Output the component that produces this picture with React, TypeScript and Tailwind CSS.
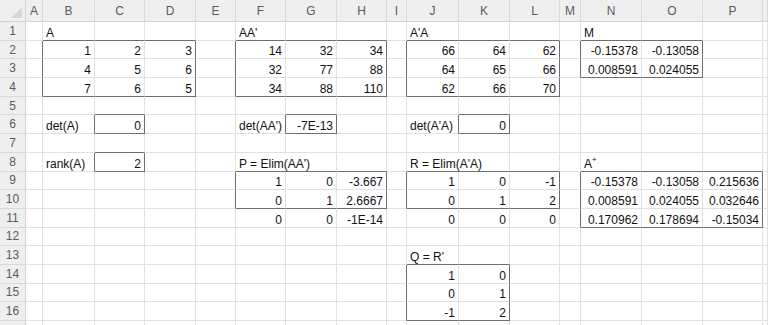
import type { ReactNode } from 'react';

// Column letters and widths of the sheet (px)
const COLS = ['A', 'B', 'C', 'D', 'E', 'F', 'G', 'H', 'I', 'J', 'K', 'L', 'M', 'N', 'O', 'P', 'Q'];
const ROW_COUNT = 17;

type Cell = { v: ReactNode; left?: boolean; span?: number };

const cells: Record<string, Cell> = {};

function put(ref: string, v: ReactNode, left = false, span = 1) {
  cells[ref] = { v, left, span };
}

// fill a block of numbers starting at a top-left cell
function block(col: string, row: number, data: (string | number)[][]) {
  const c0 = COLS.indexOf(col);
  data.forEach((line, i) =>
    line.forEach((v, j) => put(`${COLS[c0 + j]}${row + i}`, String(v)))
  );
}

put('B1', 'A', true);
put('F1', "AA'", true);
put('J1', "A'A", true);
put('N1', 'M', true);
block('B', 2, [[1, 2, 3], [4, 5, 6], [7, 6, 5]]);
block('F', 2, [[14, 32, 34], [32, 77, 88], [34, 88, 110]]);
block('J', 2, [[66, 64, 62], [64, 65, 66], [62, 66, 70]]);
block('N', 2, [['-0.15378', '-0.13058'], ['0.008591', '0.024055']]);

put('B6', 'det(A)', true);
put('C6', '0');
put('F6', "det(AA')", true);
put('G6', '-7E-13');
put('J6', "det(A'A)", true);
put('K6', '0');

put('B8', 'rank(A)', true);
put('C8', '2');
put('F8', "P = Elim(AA')", true, 2);
put('J8', "R = Elim(A'A)", true, 2);
put(
  'N8',
  <span>
    A<sup className="-top-[6px] text-[8px]">+</sup>
  </span>,
  true
);

block('F', 9, [[1, 0, '-3.667'], [0, 1, '2.6667'], [0, 0, '-1E-14']]);
block('J', 9, [[1, 0, -1], [0, 1, 2], [0, 0, 0]]);
block('N', 9, [
  ['-0.15378', '-0.13058', '0.215636'],
  ['0.008591', '0.024055', '0.032646'],
  ['0.170962', '0.178694', '-0.15034'],
]);

put('J13', "Q = R'", true);
block('J', 14, [[1, 0], [0, 1], [-1, 2]]);

// outlined ranges: [firstCol, firstRow, lastCol, lastRow]
const boxes: [string, number, string, number][] = [
  ['B', 2, 'D', 4],
  ['F', 2, 'H', 4],
  ['J', 2, 'L', 4],
  ['N', 2, 'O', 3],
  ['C', 6, 'C', 6],
  ['G', 6, 'G', 6],
  ['K', 6, 'K', 6],
  ['C', 8, 'C', 8],
  ['F', 9, 'H', 10],
  ['J', 9, 'L', 10],
  ['N', 9, 'P', 11],
  ['J', 14, 'K', 16],
];

const ci = (c: string) => COLS.indexOf(c);

// dark line under cell (row, col)?
function bottomEdge(row: number, col: number) {
  return boxes.some(
    ([c1, r1, c2, r2]) => (row === r1 - 1 || row === r2) && col >= ci(c1) && col <= ci(c2)
  );
}

// dark line to the right of cell (row, col)?
function rightEdge(row: number, col: number) {
  return boxes.some(
    ([c1, r1, c2, r2]) => (col === ci(c1) - 1 || col === ci(c2)) && row >= r1 && row <= r2
  );
}

function SheetCell({ row, col }: { row: number; col: number }) {
  const cell = cells[`${COLS[col]}${row}`];
  const span = cell?.span ?? 1;
  const last = col + span - 1;
  let dark = false;
  for (let k = col; k <= last; k++) dark = dark || bottomEdge(row, k);
  return (
    <div
      className={`flex items-end overflow-visible whitespace-nowrap border-r border-b leading-[13px] text-[12px] text-[#111] ${
        span === 2 ? 'col-span-2' : ''
      } ${rightEdge(row, last) ? 'border-r-[#6f6f6f]' : 'border-r-[#e1e1e1]'} ${
        dark ? 'border-b-[#6f6f6f]' : 'border-b-[#e1e1e1]'
      } ${cell?.left ? 'justify-start pl-[3px]' : 'justify-end pr-[3px]'}`}
    >
      {cell?.v}
    </div>
  );
}

export default function App() {
  const rows = Array.from({ length: ROW_COUNT }, (_, i) => i + 1);

  return (
    <div className="h-[325px] w-[768px] overflow-hidden bg-white font-['Liberation_Sans',Arial,sans-serif]">
      <div className="grid grid-cols-[26px_17px_52px_50px_51px_40px_50px_51px_50px_20px_52px_51px_50px_21px_61px_61px_60px_1fr] grid-rows-[22px_repeat(17,18.69px)]">
        {/* corner */}
        <div className="flex items-end justify-end border-r border-b border-[#d4d4d4] bg-[#efefef] pr-[3px] pb-[3px]">
          <svg width="11" height="11" viewBox="0 0 11 11">
            <polygon points="11,0 11,11 0,11" fill="#d6d6d6" />
          </svg>
        </div>
        {COLS.map((c) => (
          <div
            key={c}
            className="flex items-center justify-center border-r border-b border-r-[#dadada] border-b-[#d4d4d4] bg-[#efefef] text-[12px] text-[#5c5c5c]"
          >
            {c === 'Q' ? '' : c}
          </div>
        ))}

        {rows.map((r) => [
          <div
            key={`h${r}`}
            className="flex items-center justify-center border-r border-b border-r-[#d4d4d4] border-b-[#dadada] bg-[#efefef] text-[12px] text-[#5c5c5c]"
          >
            {/* last row only peeks in at the bottom edge */}
            {r < ROW_COUNT ? r : ''}
          </div>,
          ...COLS.map((_, c) => {
            // skip cells covered by a spilled label to the left
            const prev = c > 0 ? cells[`${COLS[c - 1]}${r}`] : undefined;
            if (prev?.span === 2) return null;
            return <SheetCell key={`${COLS[c]}${r}`} row={r} col={c} />;
          }),
        ])}
      </div>
    </div>
  );
}
